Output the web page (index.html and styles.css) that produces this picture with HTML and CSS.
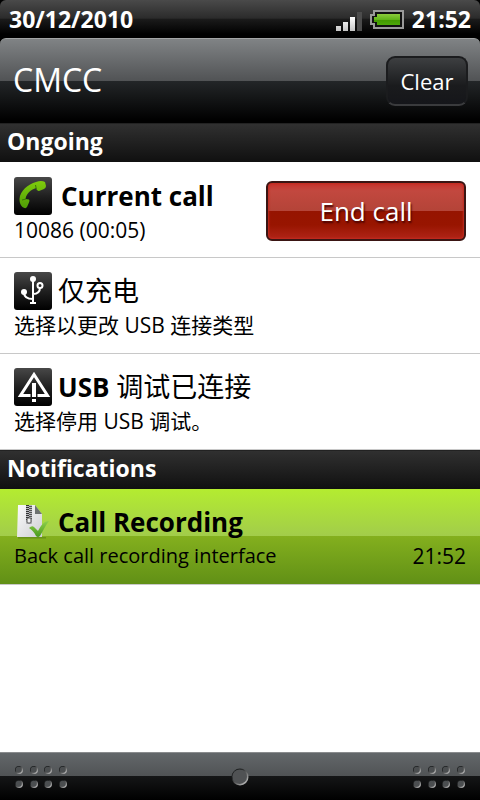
FILE: index.html
```html
<!DOCTYPE html>
<html lang="en">
<head>
<meta charset="utf-8">
<meta name="viewport" content="width=device-width, initial-scale=1">
<title>Notifications</title>
<link rel="stylesheet" href="styles.css">
</head>
<body>
<div class="top">
<div class="status-bar">
    <span>30/12/2010</span>
    <div class="status-right">
      <svg class="signal" width="26" height="20" viewBox="0 0 26 20" aria-hidden="true">
        <defs><linearGradient id="bar" x1="0" y1="0" x2="0" y2="1"><stop offset="0" stop-color="#fff"/><stop offset="1" stop-color="#c4c4c4"/></linearGradient></defs>
        <path fill="url(#bar)" d="M0 14h5v5H0zM7 10h5v9H7zM14 5h5v14h-5z"/>
        <path fill="#4c4c4c" d="M21 0h5v19h-5z"/>
      </svg>
      <svg class="battery" width="34" height="19" viewBox="0 0 34 19" aria-hidden="true">
        <defs><linearGradient id="charge" x1="0" y1="0" x2="0" y2="1"><stop offset="0" stop-color="#8ccc3c"/><stop offset=".5" stop-color="#62b41a"/><stop offset=".52" stop-color="#429800"/><stop offset="1" stop-color="#4ca808"/></linearGradient></defs>
        <path fill="#111" stroke="#9a9a9a" stroke-width="2" d="M4 1h29v17H4v-4H1V5h3z"/>
        <path fill="url(#charge)" d="M7 4h23v11H7v-3H4V7h3z"/>
      </svg>
      <span>21:52</span>
    </div>
</div>
<header class="carrier">
  <h1>CMCC</h1>
  <button class="clear" type="button">Clear</button>
</header>
</div>
<main>
  <h2 class="section">Ongoing</h2>
  <ul class="list">
    <li class="row row-call">
      <div class="row-text">
        <div class="title title-call">
          <svg width="38" height="38" viewBox="0 0 38 38" aria-hidden="true">
            <defs>
              <linearGradient id="tile" x1="0" y1="0" x2="0" y2="1"><stop offset="0" stop-color="#484848"/><stop offset=".5" stop-color="#202020"/><stop offset="1" stop-color="#000"/></linearGradient>
              <linearGradient id="phone" x1="0" y1="0" x2="0" y2="1"><stop offset="0" stop-color="#7fcc0c"/><stop offset="1" stop-color="#4f9d06"/></linearGradient>
            </defs>
            <rect width="38" height="38" rx="3" fill="url(#tile)"/>
            <path fill="url(#phone)" d="M22 5C26 3.500 29 4 31 5L32 9Q32 11 30 12L25 14Q23 14.500 22 11C17.500 12.500 12.500 16 11.500 22L15 22.500Q16 23.500 15 25.500L13 30Q12 31.500 10.500 31C7.500 30 5.500 27 5.500 22C6 14 14 7 22 5Z"/>
            <path stroke="#377605" fill="none" d="M21.500 8l.8 4M8 23l4-1"/>
          </svg>
          <h3>Current call</h3>
        </div>
        <p>10086 (00:05)</p>
      </div>
      <button class="end-call" type="button">End call</button>
    </li>
    <li class="row" lang="zh-CN">
      <div class="row-text">
        <div class="title">
          <svg width="38" height="38" viewBox="0 0 38 38" aria-hidden="true">
            <rect width="38" height="38" rx="3" fill="url(#tile)"/>
            <g fill="none" stroke="#fff" stroke-width="2">
              <path d="M19 6v25M16 31h6M10 20c0 5 4 7 9 7M26 15c0 5-2 7-7 7"/>
              <circle cx="26" cy="13.500" r="2.500"/>
            </g>
            <circle cx="19" cy="7" r="3" fill="#fff"/>
            <circle cx="10" cy="20" r="3" fill="#fff"/>
          </svg>
          <h3><span class="han">仅充电</span></h3>
        </div>
        <p>选择以更改 USB 连接类型</p>
      </div>
    </li>
    <li class="row" lang="zh-CN">
      <div class="row-text">
        <div class="title">
          <svg width="38" height="38" viewBox="0 0 38 38" aria-hidden="true">
            <rect width="38" height="38" rx="3" fill="url(#tile)"/>
            <path fill="none" stroke="#fff" stroke-width="3" d="M16.500 27.500H6.500L20 6.500L33.500 27.500H23.500"/>
            <path fill="#fff" d="M18 15h4v14h-4zM18 31h4v3h-4z"/>
          </svg>
          <h3>USB <span class="han">调试已连接</span></h3>
        </div>
        <p>选择停用 USB 调试。</p>
      </div>
    </li>
  </ul>
  <h2 class="section">Notifications</h2>
  <ul class="list">
    <li class="row row-active">
      <div class="row-text">
        <div class="title">
          <svg width="38" height="38" viewBox="0 0 38 38" aria-hidden="true">
            <defs>
              <linearGradient id="paper" x1="0" y1="0" x2="1" y2="1"><stop offset="0" stop-color="#fbfbfb"/><stop offset="1" stop-color="#cfcfd3"/></linearGradient>
              <linearGradient id="tick" x1="0" y1="0" x2="0" y2="1"><stop offset="0" stop-color="#8fd04a"/><stop offset="1" stop-color="#48991d"/></linearGradient>
            </defs>
            <path fill="#4d7514" opacity=".5" d="M4 34h28v1.500H4z"/>
            <path fill="url(#paper)" d="M4 2h17l7 9v23H3z"/>
            <path fill="#6e7270" d="M21 2v9h7z"/>
            <path fill="#b9b9bd" d="M12 2h6v19h-6z"/>
            <path stroke="#333" stroke-width="3" stroke-dasharray="1 1" d="M13.500 2v16"/>
            <path stroke="#555" stroke-width="3" stroke-dasharray="1 1" d="M16.500 3v14"/>
            <rect x="13" y="15" width="4" height="5" rx="1" fill="#eee" stroke="#555"/>
            <path fill="url(#tick)" d="M15 25q3-3 5-1l4 4c2-4 4-7 7-9q2-1 4-1c-4 5-6 10-9 15q-2 2-4 0c-2-4-4-6-7-8z"/>
          </svg>
          <h3>Call Recording</h3>
        </div>
        <p class="detail"><span class="summary">Back call recording interface</span><time>21:52</time></p>
      </div>
    </li>
  </ul>
</main>
<footer class="handle">
  <svg width="54" height="24" viewBox="0 0 54 24" aria-hidden="true">
    <defs>
      <linearGradient id="rim" x1="0" y1="0" x2="1" y2="1"><stop offset=".3" stop-color="#1c1e1f"/><stop offset=".8" stop-color="#aaa"/></linearGradient>
      <g id="dot"><circle r="4" fill="url(#rim)"/><circle r="3" cx="-.3" cy="-.3" fill="#4b4e50"/></g>
      <g id="dots"><use href="#dot" x="5" y="5"/><use href="#dot" x="20" y="5"/><use href="#dot" x="34" y="5"/><use href="#dot" x="49" y="5"/><use href="#dot" x="5" y="19"/><use href="#dot" x="20" y="19"/><use href="#dot" x="34" y="19"/><use href="#dot" x="49" y="19"/></g>
    </defs>
    <use href="#dots"/>
  </svg>
  <svg width="18" height="18" viewBox="0 0 18 18" aria-hidden="true"><circle cx="9" cy="9" r="8.500" fill="url(#rim)"/><circle cx="8.700" cy="8.700" r="7.300" fill="#505254"/></svg>
  <svg width="54" height="24" viewBox="0 0 54 24" aria-hidden="true"><use href="#dots"/></svg>
</footer>
</body>
</html>
```
FILE: styles.css
```css
* { box-sizing: border-box; }

body {
  margin: 0;
  min-height: 100vh;
  display: flex;
  flex-direction: column;
  background: #fff;
  color: #000;
  font-family: "Open Sans", "Noto Sans CJK SC", sans-serif;
  font-size: 21px;
}

h1, h2, h3, p, ul { margin: 0; padding: 0; }

svg { display: block; flex: none; }

.top { background: #000; color: #fff; }

.status-bar {
  display: flex;
  justify-content: space-between;
  align-items: center;
  height: 38px;
  padding: 0 9px;
  border-radius: 6px 6px 0 0;
  background: linear-gradient(#4a4a4a, #2b2b2b 48%, #1b1b1b 50%, #000 90%);
  font-size: 23px;
  font-weight: 700;
}

.status-right { display: flex; align-items: center; }
.signal { margin: 5px 8px 0 0; }
.battery { margin-right: 8px; }

.carrier {
  display: flex;
  justify-content: space-between;
  align-items: center;
  height: 85px;
  padding: 0 12px 0 13px;
  border-top: 1px solid #a3a5a6;
  border-radius: 6px 6px 0 0;
  background: linear-gradient(#808385, #515355 50%, #232628 50%, #000 97%);
}

h1 { font-size: 32px; font-weight: 400; line-height: 40px; padding-bottom: 2px; }

button { font-family: inherit; color: #fff; padding: 0; }

.clear {
  width: 82px;
  height: 50px;
  border: 2px solid #1b1c1e;
  border-bottom-color: #3a3b3d;
  border-radius: 9px;
  background: linear-gradient(#3d3f41, #1a1b1d 60%, #15161a);
  font-size: 22px;
}

.section {
  height: 39px;
  padding-left: 7px;
  border-top: 1px solid #222;
  background: linear-gradient(#303030, #101010);
  color: #fff;
  font-size: 23px;
  font-weight: 700;
  line-height: 34px;
}

.list { list-style: none; }

.row {
  display: flex;
  align-items: center;
  justify-content: space-between;
  height: 96px;
  padding: 0 14px;
  border-bottom: 1px solid #c8c8c8;
}

.row-text { flex: 1; }

.title { display: flex; align-items: center; gap: 6px; height: 38px; }
.title-call { gap: 9px; }

h3 { font-size: 26px; line-height: 38px; font-weight: 700; white-space: nowrap; }
.han { font-size: 27px; font-weight: 400; }

.row p { line-height: 30px; white-space: nowrap; }

.row-call { padding-top: 2px; }

.end-call {
  width: 200px;
  height: 60px;
  border: 2px solid #3a1513;
  border-radius: 6px;
  background: linear-gradient(#c9302a, #c2483f 14%, #b44438 50%, #961400 50%, #981500 75%, #b02418);
  box-shadow: inset 0 0 2px 1px #c22a20;
  font-size: 26px;
  text-shadow: 1px 2px 2px #400;
}

.row-active {
  background: linear-gradient(#b4ec30, #a2cd4a 49%, #84b01e 49%, #619016);
}

.detail { display: flex; justify-content: space-between; }
.summary { font-size: 20px; }

.handle {
  display: flex;
  align-items: center;
  justify-content: space-between;
  height: 48px;
  margin-top: auto;
  padding: 0 14px;
  border-top: 1px solid #8a8c8e;
  background: linear-gradient(#63676a, #505355 49%, #151617 49%, #000);
}
```
